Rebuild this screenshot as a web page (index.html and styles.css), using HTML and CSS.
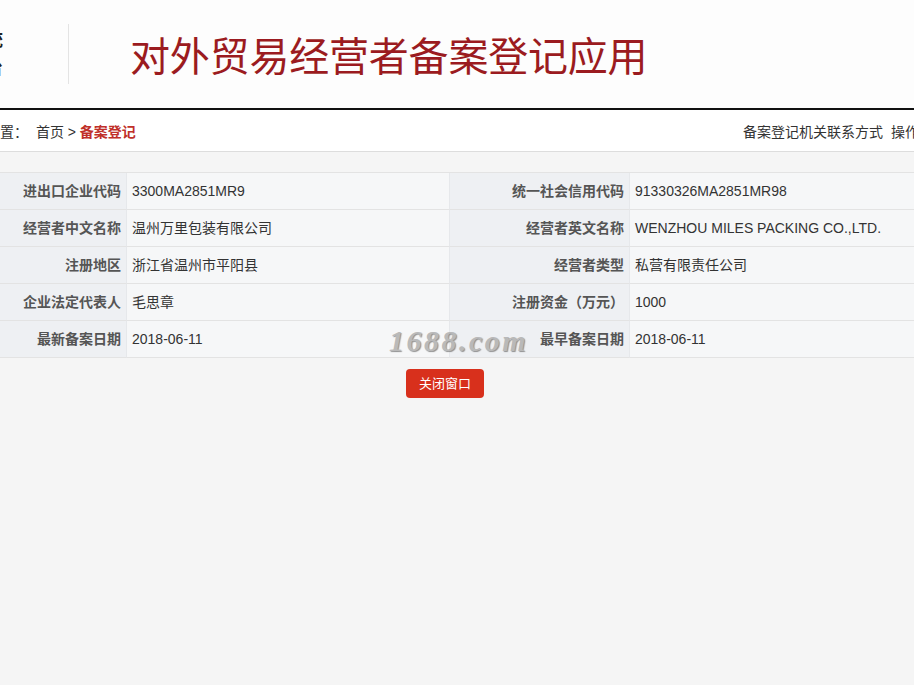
FILE: index.html
```html
<!DOCTYPE html>
<html lang="zh-CN">

<head>
    <meta charset="UTF-8">
    <meta name="viewport" content="width=device-width, initial-scale=1.0">
    <title>对外贸易经营者备案登记应用</title>
    <link rel="stylesheet" href="styles.css">
</head>

<body>
    <!-- 头部 -->
    <div class="header">
        <div class="logo">商务部业务系统<br>统一平台</div>
        <div class="sep"></div>
        <h1 class="title">对外贸易经营者备案登记应用</h1>
    </div>

    <!-- 当前位置 -->
    <div class="crumb">
        <div class="crumb-left">
            <span class="pos">当前位置：</span>
            <a href="#">首页</a> &gt; <span class="cur">备案登记</span>
        </div>
        <div class="crumb-right">
            <a href="#">备案登记机关联系方式</a>
            <a href="#">操作指南</a>
        </div>
    </div>

    <!-- 详情 -->
    <div class="main">
        <div class="info">
            <div class="lab">进出口企业代码</div>
            <div class="val">3300MA2851MR9</div>
            <div class="lab">统一社会信用代码</div>
            <div class="val">91330326MA2851MR98</div>

            <div class="lab">经营者中文名称</div>
            <div class="val">温州万里包装有限公司</div>
            <div class="lab">经营者英文名称</div>
            <div class="val">WENZHOU MILES PACKING CO.,LTD.</div>

            <div class="lab">注册地区</div>
            <div class="val">浙江省温州市平阳县</div>
            <div class="lab">经营者类型</div>
            <div class="val">私营有限责任公司</div>

            <div class="lab">企业法定代表人</div>
            <div class="val">毛思章</div>
            <div class="lab">注册资金（万元）</div>
            <div class="val">1000</div>

            <div class="lab">最新备案日期</div>
            <div class="val">2018-06-11</div>
            <div class="lab">最早备案日期</div>
            <div class="val">2018-06-11</div>
        </div>

        <div class="btns">
            <a href="#" class="closeBtn">关闭窗口</a>
        </div>

        <!-- 水印 -->
        <div class="mark">1688.com</div>
    </div>
</body>

</html>
```

FILE: styles.css
```css
/* reset */
* {
    margin: 0;
    padding: 0;
    box-sizing: border-box;
}

html,
body {
    overflow: hidden;
}

body {
    width: 914px;
    height: 685px;
    background: #f5f5f5;
    font-family: "Liberation Sans", "Noto Sans CJK SC", sans-serif;
    font-size: 14px;
    color: #333;
}

a {
    color: #333;
    text-decoration: none;
}

/* header */
.header {
    display: flex;
    align-items: center;
    height: 110px;
    background: #fdfdfd;
    border-bottom: 2px solid #111;
}

.logo {
    flex: none;
    width: 150px;
    margin-left: -147px;
    text-align: right;
    font-size: 18px;
    font-weight: bold;
    line-height: 28px;
    color: #222;
    white-space: nowrap;
}

.sep {
    flex: none;
    width: 1px;
    height: 60px;
    margin-left: 65px;
    background: #e4e4e4;
}

.title {
    margin-left: 61px;
    font-size: 40px;
    font-weight: normal;
    color: #9b1b20;
    letter-spacing: -0.2px;
    white-space: nowrap;
}

/* breadcrumb */
.crumb {
    display: flex;
    justify-content: space-between;
    align-items: center;
    height: 42px;
    background: #fff;
    border-bottom: 1px solid #ddd;
    white-space: nowrap;
}

.crumb-left {
    margin-left: -42px;
}

.crumb-left .pos {
    margin-right: 4px;
}

.crumb-left .cur {
    color: #c0302a;
    font-weight: bold;
}

.crumb-right {
    margin-right: -33px;
}

.crumb-right a {
    margin-left: 4px;
}

/* info table */
.main {
    position: relative;
    padding-top: 20px;
}

.info {
    display: grid;
    grid-template-columns: 180px 323px 180px 1fr;
    width: 1020px;
    margin-left: -53px;
    border-top: 1px solid #e3e3e3;
}

.lab,
.val {
    height: 37px;
    line-height: 36px;
    border-bottom: 1px solid #e3e3e3;
    white-space: nowrap;
}

.lab {
    padding-right: 5px;
    text-align: right;
    background: #eef0f3;
    font-weight: bold;
    color: #555;
    border-right: 1px solid #e6e8eb;
}

.val {
    padding-left: 5px;
    background: #f6f7f8;
    border-right: 1px solid #e6e8eb;
}

/* button */
.btns {
    display: flex;
    padding: 11px 0 0 406px;
}

.closeBtn {
    display: block;
    width: 78px;
    height: 29px;
    line-height: 29px;
    text-align: center;
    font-size: 13px;
    color: #fff;
    background: #d8301c;
    border-radius: 4px;
}

/* watermark */
.mark {
    position: absolute;
    left: 389px;
    top: 172px;
    font-family: "Liberation Serif", serif;
    font-size: 30px;
    font-style: italic;
    font-weight: bold;
    letter-spacing: 2.5px;
    color: #b0b0b0;
    text-shadow: 1px 1px 1px #808080;
    opacity: .85;
}
```
